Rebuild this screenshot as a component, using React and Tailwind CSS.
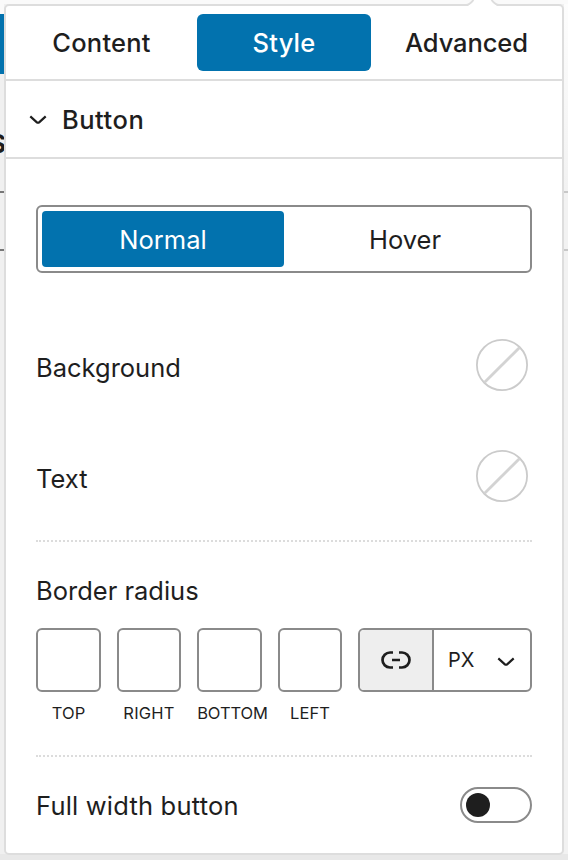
import React from "react";

function Chevron({ className }) {
  return (
    <svg className={className} viewBox="0 0 18 10" fill="none" stroke="#1e1e1e" strokeWidth="2.2">
      <path d="M1.3 1.4 7.6 7.1Q9 8.3 10.4 7.1L16.7 1.4" />
    </svg>
  );
}

function EmptySwatch() {
  return (
    <svg className="mr-1 size-[52px]" viewBox="0 0 52 52" fill="none">
      <circle cx="26" cy="26" r="25.100" stroke="#cbcbcb" strokeWidth="1.800" />
      <path d="M8.400 43.600 43.600 8.400" stroke="#d3d3d3" strokeWidth="2.800" />
    </svg>
  );
}

function Corner({ box, label, labelClass }) {
  return (
    <div className={"flex flex-col items-center " + box}>
      <div className="h-16 w-full rounded-[6px] border-2 border-[#8a8a8a]" />
      <span className={"mt-[11px] text-[16.5px] leading-5 whitespace-nowrap " + labelClass}>{label}</span>
    </div>
  );
}

function Backdrop() {
  return (
    <div className="absolute inset-0 flex justify-between bg-[#f0f0f0]">
      <div className="relative w-1">
        <div className="h-[14px] bg-[#fafafa]" />
        <div className="h-[60px] bg-[#0272ae]" />
        <span className="absolute top-[126px] right-[-2px] text-[26px] leading-9 font-bold">S</span>
        <div className="mt-[117px] h-[60px] border-y-2 border-[#777777]" />
      </div>
      <div className="w-1 bg-gradient-to-b from-[#fdfdfd] to-[#f2f2f2] to-[190px]">
        <div className="mt-[191px] h-[60px] border-y-2 border-[#c8c8c8]" />
      </div>
      <div className="absolute inset-x-0 top-0 h-1 bg-[#fafafa]" />
      <div className="absolute inset-x-0 bottom-0 h-[6px] bg-[#e8e8e8]" />
    </div>
  );
}

export default function App() {
  return (
    <div className="relative h-[860px] w-[568px] overflow-hidden font-['Inter',sans-serif] text-[25.5px] leading-8 text-[#1e1e1e]">
      <Backdrop />
      <div className="relative mt-1 ml-1 flex h-[851px] w-[560px] flex-col rounded-[5px] border-2 border-[#dddddd] bg-white">
        <svg className="absolute -top-[6px] left-[460px] h-[6px] w-[34px]" viewBox="0 0 34 6">
          <path d="M2 6 8 0H25L31 6Z" fill="#fff" />
          <path d="M0 5Q3.500 5 7.500 0M25.500 0Q29.500 5 33 5" fill="none" stroke="#dddddd" strokeWidth="2" />
        </svg>
        <div className="flex h-[75px] shrink-0 border-b-2 border-[#dddddd] pt-2 font-[460]">
          <div className="flex h-[57px] w-[191px] items-center justify-center pt-px tracking-[0.2px]">Content</div>
          <div className="flex h-[57px] w-[174px] items-center justify-center rounded-[6px] bg-[#0272ae] pt-px tracking-[0.2px] text-white">Style</div>
          <div className="flex h-[57px] w-[191px] items-center justify-center pt-px tracking-[-0.1px]">Advanced</div>
        </div>
        <div className="flex h-[78px] shrink-0 items-center border-b-2 border-[#dddddd] pl-[23px] font-[460]">
          <Chevron className="mt-px h-[10px] w-[18px]" />
          <span className="mt-[2px] ml-[15px] tracking-[0.5px]">Button</span>
        </div>
        <div className="flex flex-col px-[30px] pt-[46px]">
          <div className="flex h-[68px] rounded-[6px] border-2 border-[#8a8a8a] p-1">
            <div className="flex w-[242px] items-center justify-center rounded-[4px] bg-[#0272ae] pt-px text-white">Normal</div>
            <div className="flex flex-1 items-center justify-center pt-px">Hover</div>
          </div>
          <div className="mt-[66px] flex items-center justify-between">
            <span className="pt-[5px]">Background</span>
            <EmptySwatch />
          </div>
          <div className="mt-[59px] flex items-center justify-between">
            <span className="pt-[5px]">Text</span>
            <EmptySwatch />
          </div>
          <div className="mt-[38px] border-t-2 border-dotted border-[#dcdcdc]" />
          <div className="mt-[33px]">Border radius</div>
          <div className="mt-[21px] flex gap-4">
            <Corner box="w-[65px]" label="TOP" labelClass="tracking-[0.1px]" />
            <Corner box="w-16" label="RIGHT" labelClass="tracking-[0.2px]" />
            <Corner box="w-[65px]" label="BOTTOM" labelClass="tracking-[-0.1px] ml-[6px]" />
            <Corner box="w-16" label="LEFT" labelClass="tracking-[0.1px]" />
            <div className="flex h-16 flex-1 overflow-hidden rounded-[6px] border-2 border-[#8a8a8a]">
              <div className="flex w-[74px] items-center justify-center border-r-2 border-[#8a8a8a] bg-[#eeeeee]">
                <svg className="h-[18px] w-[30px]" viewBox="0 0 30 18" fill="none" stroke="#1e1e1e" strokeWidth="2.700">
                  <path d="M12 1.500H9a7.500 7.500 0 0 0 0 15H12M18 1.500H21a7.500 7.500 0 0 1 0 15H18M11 9H19" />
                </svg>
              </div>
              <div className="flex flex-1 items-center justify-between pr-[15px] pl-[14px]">
                <span className="text-[20px]">PX</span>
                <Chevron className="mt-[3px] h-[10px] w-[18px]" />
              </div>
            </div>
          </div>
          <div className="mt-8 border-t-2 border-dotted border-[#dcdcdc]" />
          <div className="mt-[30px] flex h-9 items-center justify-between">
            <span className="pt-px tracking-[0.2px]">Full width button</span>
            <div className="h-9 w-[72px] rounded-full border-2 border-[#8a8a8a] p-1">
              <div className="size-6 rounded-full bg-[#1e1e1e]" />
            </div>
          </div>
        </div>
      </div>
    </div>
  );
}
